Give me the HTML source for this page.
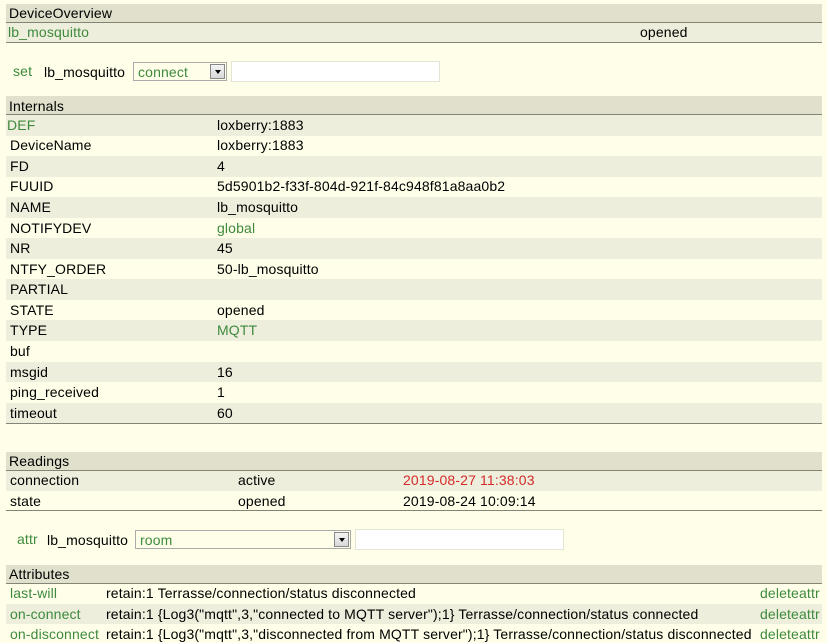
<!DOCTYPE html>
<html><head><meta charset="utf-8"><style>
body{margin:0;width:827px;height:643px;background:#FFFFE9;font-family:"Liberation Sans",Arial,sans-serif;font-size:14px;letter-spacing:0.14px;color:#000;position:relative;overflow:hidden}
.a{position:absolute;white-space:nowrap}
.h{position:absolute;left:6px;width:816px;background:#E0E0CC;border-bottom:1px solid #858575;height:18px}
.r{position:absolute;left:6px;width:816px;height:20px}
.d{background:#EEEEDC}
.l{position:absolute;left:6px;width:816px;height:1px;background:#858575}
.g{color:#3d8a3d}
.red{color:#d42a2a}
.sel{position:absolute;border:1px solid #aaa;background:#FFFFE9;height:19px;box-sizing:border-box}
.sel span{position:absolute;left:4px;top:1px;color:#3d8a3d}
.btn{position:absolute;right:1px;top:1px;width:15px;height:15px;border:1px solid #888;background:linear-gradient(#f4f4f4,#d8d8d8);box-sizing:border-box}
.btn:after{content:"";position:absolute;left:4px;top:5px;border-left:3px solid transparent;border-right:3px solid transparent;border-top:4px solid #000}
.inp{position:absolute;background:#fff;border:1px solid #e4e4d4;height:21px;box-sizing:border-box}
</style></head><body>
<div class="h" style="top:4px"></div><div class="a" style="left:9px;top:5px">DeviceOverview</div>
<div class="r d" style="top:23px"></div><div class="l" style="top:42px"></div>
<div class="a g" style="left:8px;top:24px">lb_mosquitto</div><div class="a" style="left:640px;top:24px">opened</div>

<div class="a g" style="left:13px;top:63px">set</div><div class="a" style="left:44px;top:64px">lb_mosquitto</div>
<div class="sel" style="left:133px;top:62px;width:94px"><span>connect</span><div class="btn"></div></div>
<div class="inp" style="left:231px;top:61px;width:209px"></div>

<div class="h" style="top:96px"></div><div class="a" style="left:9px;top:98px">Internals</div>
<div class="r d" style="top:115px;height:21px"></div>
<div class="r d" style="top:156px;height:21px"></div>
<div class="r d" style="top:197px;height:21px"></div>
<div class="r d" style="top:238px;height:21px"></div>
<div class="r d" style="top:279px;height:21px"></div>
<div class="r d" style="top:320px;height:21px"></div>
<div class="r d" style="top:362px;height:20px"></div>
<div class="r d" style="top:403px;height:20px"></div>
<div class="l" style="top:423px"></div>
<div class="a g" style="left:7px;top:117px">DEF</div><div class="a" style="left:217px;top:117px">loxberry:1883</div>
<div class="a" style="left:10px;top:137px">DeviceName</div><div class="a" style="left:217px;top:137px">loxberry:1883</div>
<div class="a" style="left:10px;top:158px">FD</div><div class="a" style="left:217px;top:158px">4</div>
<div class="a" style="left:10px;top:178px">FUUID</div><div class="a" style="left:217px;top:178px">5d5901b2-f33f-804d-921f-84c948f81a8aa0b2</div>
<div class="a" style="left:10px;top:199px">NAME</div><div class="a" style="left:217px;top:199px">lb_mosquitto</div>
<div class="a" style="left:10px;top:220px">NOTIFYDEV</div><div class="a g" style="left:217px;top:220px">global</div>
<div class="a" style="left:10px;top:240px">NR</div><div class="a" style="left:217px;top:240px">45</div>
<div class="a" style="left:10px;top:261px">NTFY_ORDER</div><div class="a" style="left:217px;top:261px">50-lb_mosquitto</div>
<div class="a" style="left:10px;top:281px">PARTIAL</div>
<div class="a" style="left:10px;top:302px">STATE</div><div class="a" style="left:217px;top:302px">opened</div>
<div class="a" style="left:10px;top:322px">TYPE</div><div class="a g" style="left:217px;top:322px">MQTT</div>
<div class="a" style="left:10px;top:343px">buf</div>
<div class="a" style="left:10px;top:364px">msgid</div><div class="a" style="left:217px;top:364px">16</div>
<div class="a" style="left:10px;top:384px">ping_received</div><div class="a" style="left:217px;top:384px">1</div>
<div class="a" style="left:10px;top:405px">timeout</div><div class="a" style="left:217px;top:405px">60</div>

<div class="h" style="top:452px"></div><div class="a" style="left:9px;top:453px">Readings</div>
<div class="r d" style="top:471px"></div><div class="l" style="top:510px"></div>
<div class="a" style="left:10px;top:472px">connection</div><div class="a" style="left:238px;top:472px">active</div><div class="a red" style="left:403px;top:472px">2019-08-27 11:38:03</div>
<div class="a" style="left:10px;top:493px">state</div><div class="a" style="left:238px;top:493px">opened</div><div class="a" style="left:403px;top:493px">2019-08-24 10:09:14</div>

<div class="a g" style="left:17px;top:531px">attr</div><div class="a" style="left:47px;top:532px">lb_mosquitto</div>
<div class="sel" style="left:135px;top:530px;width:216px"><span>room</span><div class="btn"></div></div>
<div class="inp" style="left:355px;top:529px;width:209px"></div>

<div class="h" style="top:565px"></div><div class="a" style="left:9px;top:566px">Attributes</div>
<div class="r d" style="top:604px"></div>
<div class="a g" style="left:10px;top:585px">last-will</div><div class="a" style="left:106px;top:585px">retain:1 Terrasse/connection/status disconnected</div><div class="a g" style="left:760px;top:585px">deleteattr</div>
<div class="a g" style="left:10px;top:606px">on-connect</div><div class="a" style="left:106px;top:606px">retain:1 {Log3("mqtt",3,"connected to MQTT server");1} Terrasse/connection/status connected</div><div class="a g" style="left:760px;top:606px">deleteattr</div>
<div class="a g" style="left:10px;top:626px">on-disconnect</div><div class="a" style="left:106px;top:626px">retain:1 {Log3("mqtt",3,"disconnected from MQTT server");1} Terrasse/connection/status disconnected</div><div class="a g" style="left:760px;top:626px">deleteattr</div>
</body></html>
